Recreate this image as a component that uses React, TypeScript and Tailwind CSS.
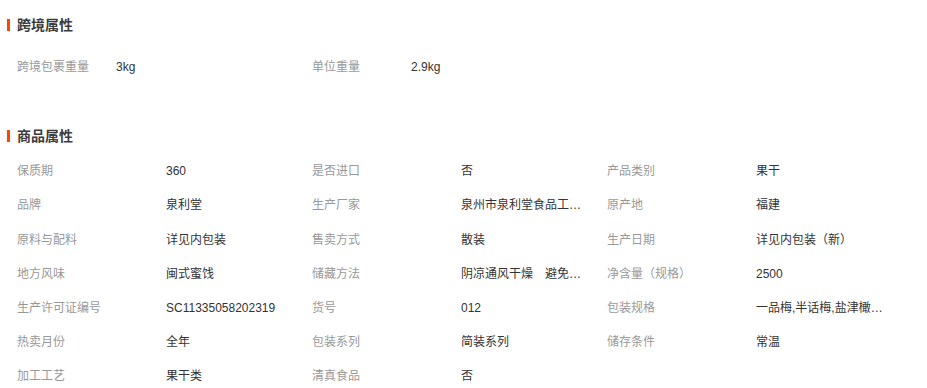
import React from "react";

const font = { fontFamily: '"Liberation Sans", Arial, "Noto Sans CJK SC", sans-serif' };

type Item = [string, string];

const cross: Item[] = [
  ["跨境包裹重量", "3kg"],
  ["单位重量", "2.9kg"],
];

const goods: Item[] = [
  ["保质期", "360"],
  ["是否进口", "否"],
  ["产品类别", "果干"],
  ["品牌", "泉利堂"],
  ["生产厂家", "泉州市泉利堂食品工业有限公司"],
  ["原产地", "福建"],
  ["原料与配料", "详见内包装"],
  ["售卖方式", "散装"],
  ["生产日期", "详见内包装（新）"],
  ["地方风味", "闽式蜜饯"],
  ["储藏方法", "阴凉通风干燥　避免阳光直射"],
  ["净含量（规格）", "2500"],
  ["生产许可证编号", "SC11335058202319"],
  ["货号", "012"],
  ["包装规格", "一品梅,半话梅,盐津橄榄,九制陈皮"],
  ["热卖月份", "全年"],
  ["包装系列", "简装系列"],
  ["储存条件", "常温"],
  ["加工工艺", "果干类"],
  ["清真食品", "否"],
];

function Title({ text }: { text: string }) {
  return (
    <div className="flex items-center h-[20px] pl-[7px]">
      <span className="w-[3px] h-[12px] bg-[#ff4400]" />
      <span className="ml-[7px] text-[14px] font-bold text-[#3c3c3c] leading-[20px]">{text}</span>
    </div>
  );
}

function Row({ item, labelW }: { item: Item; labelW: string }) {
  return (
    <div className="flex items-center h-[34.2px] w-[295px] text-[12px]">
      <span className={`${labelW} shrink-0 text-[#999999] whitespace-nowrap`}>{item[0]}</span>
      <span className="w-[128px] text-[#333333] whitespace-nowrap overflow-hidden text-ellipsis">{item[1]}</span>
    </div>
  );
}

export default function App() {
  return (
    <div className="w-[927px] h-[388px] bg-white overflow-hidden" style={font}>
      <div className="pt-[15px]">
        <Title text="跨境属性" />
      </div>
      <div className="flex pl-[17px] mt-[15px]">
        {cross.map((it) => (
          <Row key={it[0]} item={it} labelW="w-[99px]" />
        ))}
      </div>
      <div className="mt-[42px]">
        <Title text="商品属性" />
      </div>
      <div className="grid grid-cols-[295px_295px_295px] pl-[17px] mt-[8px]">
        {goods.map((it) => (
          <Row key={it[0]} item={it} labelW="w-[149px]" />
        ))}
      </div>
    </div>
  );
}
